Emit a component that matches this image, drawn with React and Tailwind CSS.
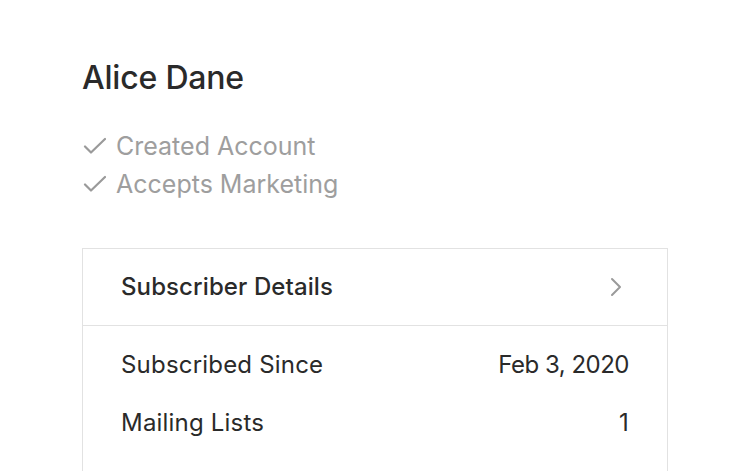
import React from 'react';

function Check() {
  return (
    <svg width="24" height="24" viewBox="0 0 24 24" fill="none" stroke="#9a9a9a" strokeWidth="2.2" strokeLinecap="round" strokeLinejoin="round">
      <path d="M3 12.5l6 6L23 5" />
    </svg>
  );
}

function Chevron() {
  return (
    <svg width="14" height="20" viewBox="0 0 14 20" fill="none" stroke="#9a9a9a" strokeWidth="2" strokeLinecap="round" strokeLinejoin="round">
      <path d="M3 2l8 8-8 8" />
    </svg>
  );
}

export default function App() {
  return (
    <div className="min-h-screen bg-white pl-[82px] pt-[58px] font-['Inter',sans-serif] text-[#2a2a2a]">
      <h1 className="text-[32px] leading-[40px] font-medium tracking-[-0.2px]">Alice Dane</h1>

      <div className="mt-[29px] flex flex-col text-[#9e9e9e] text-[25px] leading-[38px]">
        <div className="flex items-center gap-[10px]">
          <Check />
          <span>Created Account</span>
        </div>
        <div className="flex items-center gap-[10px]">
          <Check />
          <span>Accepts Marketing</span>
        </div>
      </div>

      <div className="mt-[45px] w-[586px] border border-[#e2e2e2] border-b-0">
        <div className="flex items-center justify-between h-[77px] pl-[38px] pr-[44px] border-b border-[#e2e2e2]">
          <span className="text-[24px] font-medium tracking-[0.1px]">Subscriber Details</span>
          <Chevron />
        </div>
        <div className="px-[38px] pt-[20px] pb-[40px] text-[24px] tracking-[0.2px] text-[#2a2a2a]">
          <div className="flex justify-between h-[38px] items-center">
            <span>Subscribed Since</span>
            <span className="tracking-[-0.5px]">Feb 3, 2020</span>
          </div>
          <div className="flex justify-between h-[38px] items-center mt-[20px]">
            <span>Mailing Lists</span>
            <span>1</span>
          </div>
        </div>
      </div>
    </div>
  );
}
